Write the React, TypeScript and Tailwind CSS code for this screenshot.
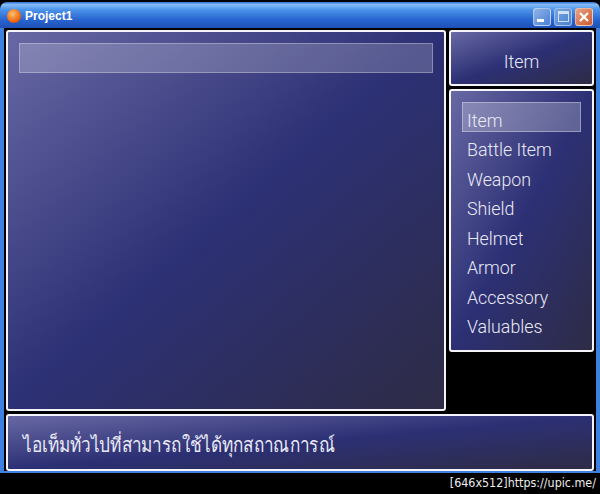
const panelGradient =
  "rounded-[3px] border-2 border-[#f4f4fa] bg-[linear-gradient(to_bottom_right,#6868a4_0%,#2c3074_50%,#2e2c46_100%)]";

const commands = ["Item", "Battle Item", "Weapon", "Shield", "Helmet", "Armor", "Accessory", "Valuables"];

function WindowButtons() {
  return (
    <div className="mt-[3px] flex items-center gap-[3px]">
      <div className="flex h-[18px] w-[18px] items-end rounded-[3px] border border-white/50 bg-[linear-gradient(135deg,#8fb4e6,#4a80d4)] pb-[3px] pl-[3px]">
        <div className="h-[3px] w-[7px] bg-white" />
      </div>
      <div className="flex h-[18px] w-[18px] items-center justify-center rounded-[3px] border border-white/40 bg-[linear-gradient(135deg,#78a6e0,#4a80d0)]">
        <div className="h-[11px] w-[11px] border border-t-[3px] border-white/70" />
      </div>
      <div className="flex h-[18px] w-[18px] items-center justify-center rounded-[3px] border border-white/50 bg-[linear-gradient(135deg,#e8a284,#cc5a30)]">
        <svg width="12" height="12" viewBox="0 0 12 12">
          <path d="M2 2 L10 10 M10 2 L2 10" stroke="#fff" strokeWidth="2.2" />
        </svg>
      </div>
    </div>
  );
}

export default function App() {
  return (
    <div className="h-[494px] w-[600px] overflow-hidden bg-black font-['Roboto',sans-serif]">
      <div className="h-[2px]" />
      <div className="flex h-[26px] items-center justify-between rounded-t-[7px] bg-[linear-gradient(180deg,#2f6fd8_0%,#84bdf6_10%,#4a92ea_30%,#2763cf_70%,#1f50b8_100%)] pl-[7px] pr-[7px]">
        <div className="flex items-center gap-[4px] pt-[2px]">
          <div className="h-[14px] w-[14px] rounded-full bg-[radial-gradient(circle_at_40%_35%,#ffc070,#f06a10_60%,#b03a08)]" />
          <span className="font-['Liberation_Sans',sans-serif] text-[12px] font-bold text-white">Project1</span>
        </div>
        <WindowButtons />
      </div>
      <div className="h-[445px] border-x-[4px] border-b-[2px] border-x-[#3f7fe0] border-b-[#3f7fe0] bg-black px-[2px] pt-[2px]">
        <div className="grid grid-cols-[440px_145px] grid-rows-[56px_322px_57px] gap-[3px]">
          <div className={`row-span-2 p-[11px] ${panelGradient}`}>
            <div className="h-[30px] border border-white/30 bg-white/20" />
          </div>
          <div className={`flex items-center justify-center pt-[8px] ${panelGradient}`}>
            <span className="text-[17.8px] font-light text-[#eaeaf6]">Item</span>
          </div>
          <div className="flex flex-col items-start">
            <div className={`h-[263px] w-full px-[11px] pt-[11px] ${panelGradient}`}>
              {commands.map((c, i) => (
                <div
                  key={c}
                  className={`flex h-[29.5px] items-center border pl-[4px] pt-[8px] text-[17.8px] font-light leading-none text-[#eaeaf6] ${
                    i === 0 ? "border-white/35 bg-white/25" : "border-transparent"
                  }`}
                >
                  {c}
                </div>
              ))}
            </div>
          </div>
          <div className={`col-span-2 flex items-center pl-[15px] pt-[4px] ${panelGradient}`}>
            <span className="origin-left scale-x-[0.857] whitespace-nowrap font-['Noto_Sans',sans-serif] text-[20px] font-light text-[#eaeaf6]">
              ไอเท็มทั่วไปที่สามารถใช้ได้ทุกสถาณการณ์
            </span>
          </div>
        </div>
      </div>
      <div className="flex justify-end pr-[4px] pt-[1px] font-['DejaVu_Sans',sans-serif] text-[12.4px] leading-[17px] text-[#ececec] font-stretch-condensed">
        [646x512]https://upic.me/
      </div>
    </div>
  );
}
